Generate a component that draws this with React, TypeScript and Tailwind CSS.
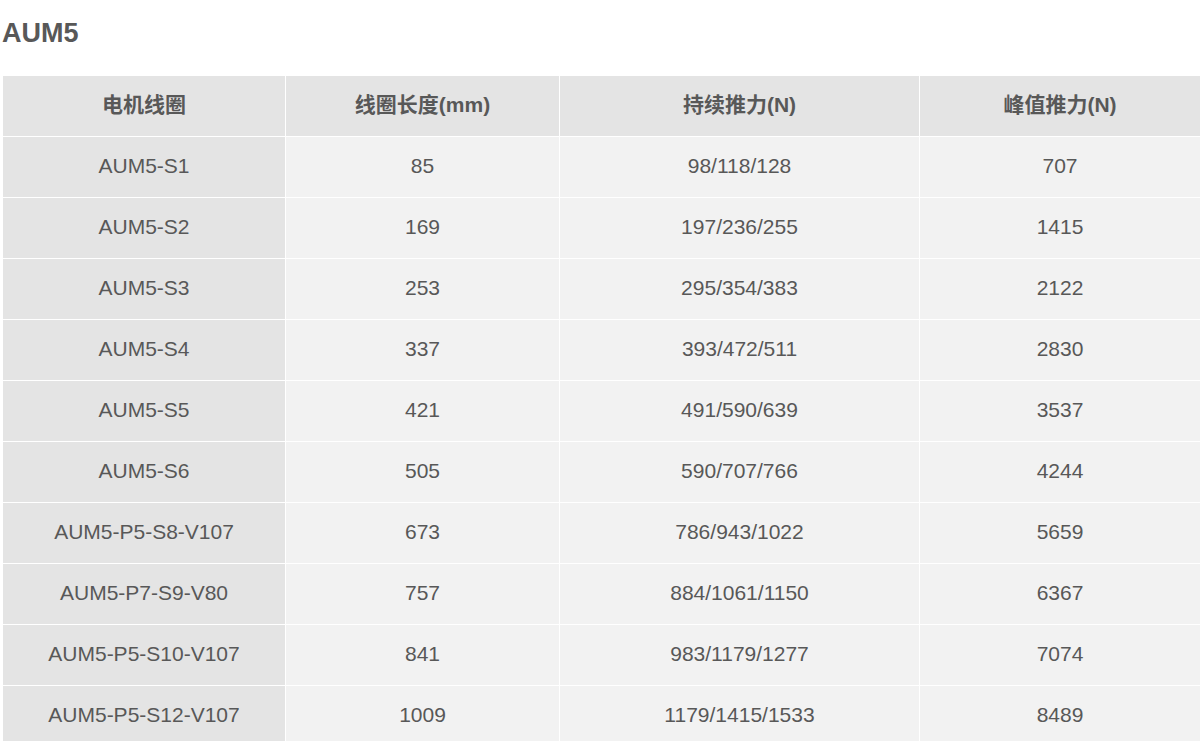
const HEAD = ["电机线圈", "线圈长度(mm)", "持续推力(N)", "峰值推力(N)"];

const ROWS: [string, string, string, string][] = [
  ["AUM5-S1", "85", "98/118/128", "707"],
  ["AUM5-S2", "169", "197/236/255", "1415"],
  ["AUM5-S3", "253", "295/354/383", "2122"],
  ["AUM5-S4", "337", "393/472/511", "2830"],
  ["AUM5-S5", "421", "491/590/639", "3537"],
  ["AUM5-S6", "505", "590/707/766", "4244"],
  ["AUM5-P5-S8-V107", "673", "786/943/1022", "5659"],
  ["AUM5-P7-S9-V80", "757", "884/1061/1150", "6367"],
  ["AUM5-P5-S10-V107", "841", "983/1179/1277", "7074"],
  ["AUM5-P5-S12-V107", "1009", "1179/1415/1533", "8489"],
];

export default function App() {
  return (
    <div
      className="bg-white px-[2px] text-[#585858]"
      style={{ fontFamily: '"Liberation Sans", Arial, "Noto Sans CJK SC", sans-serif' }}
    >
      <h2 className="pt-[16px] text-[27px] font-bold leading-[34px]">AUM5</h2>
      <table className="mt-[25px] w-[1199px] table-fixed border-collapse text-center text-[21px]">
        <colgroup>
          <col className="w-[283px]" />
          <col className="w-[274px]" />
          <col className="w-[360px]" />
          <col />
        </colgroup>
        <thead>
          <tr>
            {HEAD.map((h) => (
              <th
                key={h}
                className="h-[61px] border border-white bg-[#e4e4e4] pb-[2px] font-bold"
              >
                {h}
              </th>
            ))}
          </tr>
        </thead>
        <tbody>
          {ROWS.map((r) => (
            <tr key={r[0]}>
              {r.map((c, i) => (
                <td
                  key={i}
                  className={
                    "h-[61px] border border-white pb-[2px] " +
                    (i === 0 ? "bg-[#e4e4e4]" : "bg-[#f2f2f2]")
                  }
                >
                  {c}
                </td>
              ))}
            </tr>
          ))}
        </tbody>
      </table>
    </div>
  );
}
